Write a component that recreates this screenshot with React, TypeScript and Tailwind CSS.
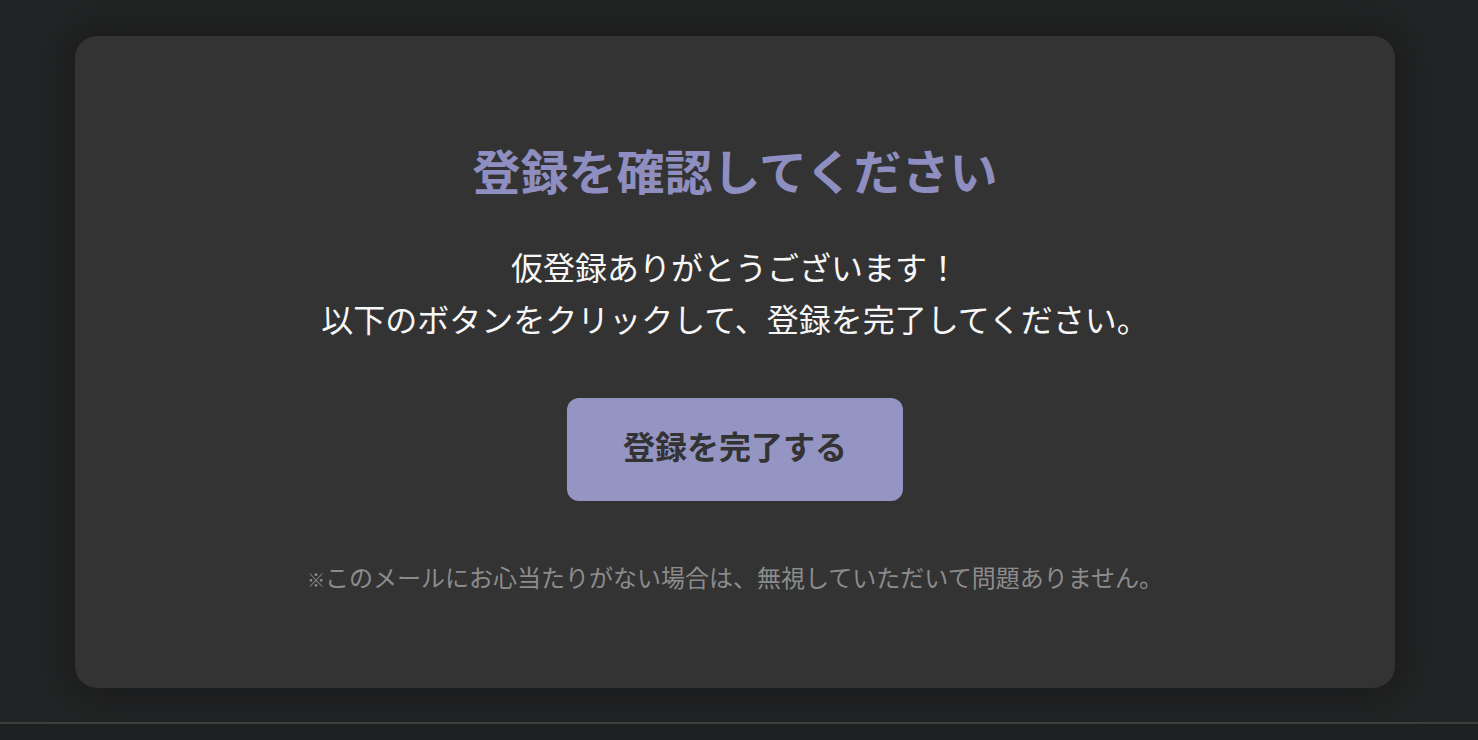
import React from "react";

export default function App() {
  return (
    <div
      className="w-[1478px] h-[740px] flex flex-col bg-[#232425] overflow-hidden"
      style={{ fontFamily: '"Noto Sans CJK JP", "Noto Sans", sans-serif' }}
    >
      <div className="h-[722px] pt-[36px] pl-[75px]">
        <div className="w-[1320px] h-[652px] rounded-[22px] bg-[#333333] shadow-[0_0_40px_10px_rgba(0,0,0,0.28)] flex flex-col items-center pt-[97px]">
          <h1 className="text-[48px] leading-[72px] font-bold text-[#8e8ec1]">
            登録を確認してください
          </h1>
          <p className="mt-[35px] text-[32px] leading-[52px] text-[#f7f7f7] text-center">
            仮登録ありがとうございます！
            <br />
            以下のボタンをクリックして、登録を完了してください。
          </p>
          <button className="mt-[54px] w-[336px] h-[103px] rounded-[12px] bg-[#9595c4] text-[#333333] text-[32px] font-bold flex items-center justify-center pb-[9px]">
            登録を完了する
          </button>
          <p className="mt-[58px] text-[24px] leading-[36px] text-[#8c8c8c]">
            <span className="text-[18px] font-bold">※</span>
            このメールにお心当たりがない場合は、無視していただいて問題ありません。
          </p>
        </div>
      </div>
      <div className="h-[2px] bg-[#3d3e3e]" />
      <div className="flex-1 bg-[#1f2021]" />
    </div>
  );
}
